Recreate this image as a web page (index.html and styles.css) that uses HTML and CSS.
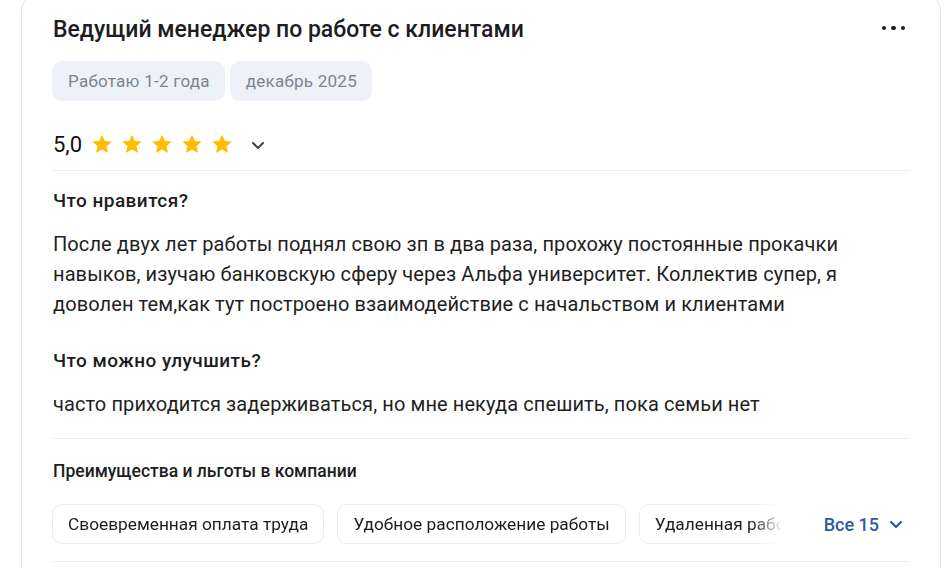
FILE: index.html
```html
<!DOCTYPE html>
<html lang="ru">
<head>
<meta charset="utf-8">
<link rel="stylesheet" href="styles.css">
</head>
<body>
<div class="card">
  <div class="head">
    <h2 class="title">Ведущий менеджер по работе с клиентами</h2>
    <button class="more" aria-label="Ещё"><span></span><span></span><span></span></button>
  </div>
  <div class="tags">
    <span class="tag">Работаю 1-2 года</span>
    <span class="tag">декабрь 2025</span>
  </div>
  <div class="rating">
    <span class="score">5,0</span>
    <span class="stars">
      <svg viewBox="0 0 24 24" class="star"><path d="M12 1.8l3.1 6.9 7.4.7-5.6 5 1.7 7.4L12 17.9l-6.6 3.9 1.7-7.4-5.6-5 7.4-.7z"/></svg>
      <svg viewBox="0 0 24 24" class="star"><path d="M12 1.8l3.1 6.9 7.4.7-5.6 5 1.7 7.4L12 17.9l-6.6 3.9 1.7-7.4-5.6-5 7.4-.7z"/></svg>
      <svg viewBox="0 0 24 24" class="star"><path d="M12 1.8l3.1 6.9 7.4.7-5.6 5 1.7 7.4L12 17.9l-6.6 3.9 1.7-7.4-5.6-5 7.4-.7z"/></svg>
      <svg viewBox="0 0 24 24" class="star"><path d="M12 1.8l3.1 6.9 7.4.7-5.6 5 1.7 7.4L12 17.9l-6.6 3.9 1.7-7.4-5.6-5 7.4-.7z"/></svg>
      <svg viewBox="0 0 24 24" class="star"><path d="M12 1.8l3.1 6.9 7.4.7-5.6 5 1.7 7.4L12 17.9l-6.6 3.9 1.7-7.4-5.6-5 7.4-.7z"/></svg>
    </span>
    <svg class="chev" viewBox="0 0 16 16"><path d="M3 6l5 5 5-5" fill="none" stroke="currentColor" stroke-width="2" stroke-linecap="round" stroke-linejoin="round"/></svg>
  </div>
  <div class="divider"></div>
  <h3 class="q">Что нравится?</h3>
  <p class="text">После двух лет работы поднял свою зп в два раза, прохожу постоянные прокачки навыков, изучаю банковскую сферу через Альфа университет. Коллектив супер, я доволен тем,как тут построено взаимодействие с начальством и клиентами</p>
  <h3 class="q q2">Что можно улучшить?</h3>
  <p class="text">часто приходится задерживаться, но мне некуда спешить, пока семьи нет</p>
  <div class="divider d2"></div>
  <h4 class="perks-title">Преимущества и льготы в компании</h4>
  <div class="perks">
    <div class="perk-list">
      <span class="perk">Своевременная оплата труда</span>
      <span class="perk">Удобное расположение работы</span>
      <span class="perk">Удаленная работа</span>
    </div>
    <button class="all">Все 15
      <svg class="chev2" viewBox="0 0 16 16"><path d="M3 6l5 5 5-5" fill="none" stroke="currentColor" stroke-width="2.2" stroke-linecap="round" stroke-linejoin="round"/></svg>
    </button>
  </div>
  <div class="divider d3"></div>
</div>
</body>
</html>
```
FILE: styles.css
```css
* { box-sizing: border-box; }
html, body { margin: 0; padding: 0; background: #fff; overflow: hidden; }
body {
  font-family: Roboto, "Noto Sans", Arial, sans-serif;
  color: #1f1f1f;
  height: 568px;
}
.card {
  margin: -8px 0 0 21px;
  width: 920px;
  border: 1px solid #e1e5ec;
  border-radius: 20px;
  padding: 23px 30px 40px 30px;
  background: #fff;
}
.head {
  display: flex;
  align-items: center;
  justify-content: space-between;
  height: 28px;
}
.title {
  margin: 0;
  font-size: 23px;
  line-height: 28px;
  font-weight: 500;
  color: #1d1d1f;
  padding-left: 1px;
}
.more {
  border: 0;
  background: none;
  padding: 0;
  display: flex;
  gap: 5px;
  margin-right: 5px;
  margin-top: -4px;
}
.more span {
  width: 4.5px;
  height: 4.5px;
  border-radius: 50%;
  background: #1d1d1f;
}
.tags {
  display: flex;
  gap: 5px;
  margin-top: 17px;
}
.tag {
  height: 40px;
  line-height: 40px;
  padding: 0 15px 0 16px;
  background: #eef1f7;
  border-radius: 10px;
  color: #7b8594;
  font-size: 17px;
  letter-spacing: 0.25px;
}
.rating {
  display: flex;
  align-items: center;
  height: 30px;
  margin-top: 28px;
}
.score {
  font-size: 22px;
  color: #111;
  padding-left: 1px;
}
.stars {
  display: flex;
  gap: 8px;
  margin-left: 9px;
}
.star {
  width: 22px;
  height: 22px;
  fill: #ffbf00;
}
.chev {
  width: 16px;
  height: 16px;
  color: #444;
  margin-left: 17px;
  margin-top: 2px;
}
.divider {
  height: 1px;
  background: #eef0f4;
  margin-top: 11px;
}
.q {
  margin: 18px 0 0;
  font-size: 19px;
  line-height: 24px;
  font-weight: 500;
  letter-spacing: 0.45px;
  color: #1d1d1f;
  padding-left: 1px;
}
.q2 { margin-top: 30px; }
.text {
  margin: 16px 0 0;
  font-size: 20px;
  line-height: 30px;
  letter-spacing: 0.1px;
  color: #1f1f1f;
  padding-left: 1px;
}
.d2 { margin-top: 19px; }
.perks-title {
  margin: 21px 0 0;
  font-size: 17.5px;
  line-height: 22px;
  font-weight: 500;
  color: #1d1d1f;
  padding-left: 1px;
}
.perks {
  display: flex;
  align-items: center;
  margin-top: 22px;
}
.perk-list {
  display: flex;
  gap: 13px;
  width: 730px;
  overflow: hidden;
  -webkit-mask-image: linear-gradient(to right, #000 700px, transparent 730px);
  mask-image: linear-gradient(to right, #000 700px, transparent 730px);
}
.perk {
  flex: none;
  height: 40px;
  line-height: 38px;
  padding: 0 15px;
  border: 1px solid #eaedf3;
  border-radius: 10px;
  font-size: 17.3px;
  color: #1d1d1f;
  white-space: nowrap;
}
.all {
  margin-left: auto;
  border: 0;
  background: none;
  padding: 0;
  font-family: inherit;
  font-size: 18px;
  font-weight: 500;
  color: #2e5aa7;
  display: flex;
  align-items: center;
  gap: 9px;
  margin-right: 6px;
}
.chev2 {
  width: 16px;
  height: 16px;
  color: #2e5aa7;
}
.d3 { margin-top: 17px; }
```
